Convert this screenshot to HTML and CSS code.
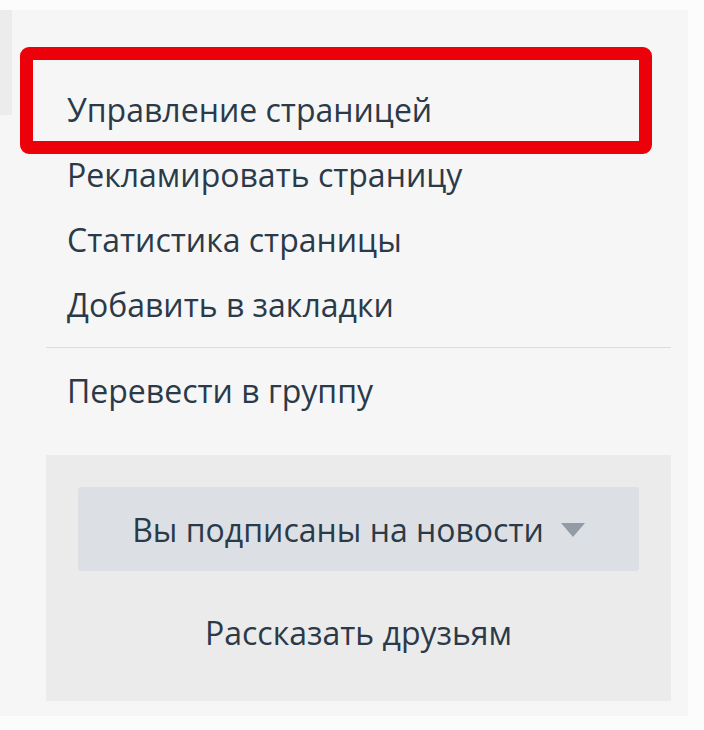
FILE: index.html
```html
<!DOCTYPE html>
<html lang="ru">
<head>
<meta charset="utf-8">
<title>Меню страницы</title>
<link rel="stylesheet" href="styles.css">
</head>
<body>
<div class="page">
  <div class="panel">
    <ul class="menu">
      <li class="item item-highlight">Управление страницей</li>
      <li class="item">Рекламировать страницу</li>
      <li class="item">Статистика страницы</li>
      <li class="item">Добавить в закладки</li>
    </ul>
    <div class="divider"></div>
    <ul class="menu">
      <li class="item">Перевести в группу</li>
    </ul>
    <div class="actions">
      <div class="subscribe-btn">
        <span>Вы подписаны на новости</span>
        <span class="caret"></span>
      </div>
      <div class="share">Рассказать друзьям</div>
    </div>
  </div>
</div>
</body>
</html>
```

FILE: styles.css
```css
html, body {
  margin: 0;
  padding: 0;
  background: #fcfcfc;
}
body {
  font-family: "Open Sans", "Noto Sans", sans-serif;
  color: #2b3a49;
}
.page {
  width: 704px;
  height: 730px;
  padding-top: 10px;
  box-sizing: border-box;
}
.panel {
  position: relative;
  width: 688px;
  height: 706px;
  background: #f6f6f6;
  padding: 67px 17px 0 46px;
  box-sizing: border-box;
}
.panel::before {
  content: "";
  position: absolute;
  left: 0;
  top: 0;
  width: 12px;
  height: 105px;
  background: #ececec;
}
.menu {
  list-style: none;
  margin: 0;
  padding: 0;
}
.item {
  height: 65px;
  line-height: 65px;
  padding-left: 21px;
  font-size: 32px;
  white-space: nowrap;
}
.item-highlight {
  position: relative;
}
.item-highlight::after {
  content: "";
  position: absolute;
  left: -26px;
  top: -30px;
  width: 632px;
  height: 107px;
  box-sizing: border-box;
  border: 13px solid #ec0009;
  border-radius: 9px;
}
.divider {
  height: 1px;
  background: #dcdcdc;
  margin: 10px 0 10px;
}
.actions {
  margin-top: 32px;
  background: #ebebeb;
  height: 246px;
  padding: 32px 32px 0;
  box-sizing: border-box;
}
.subscribe-btn {
  height: 84px;
  background: #dce0e4;
  border-radius: 3px;
  display: flex;
  align-items: center;
  justify-content: center;
  gap: 17px;
  font-size: 32px;
}
.caret {
  width: 0;
  height: 0;
  border-left: 12px solid transparent;
  border-right: 12px solid transparent;
  border-top: 14px solid #939ca6;
  margin-top: 2px;
}
.share {
  text-align: center;
  font-size: 32px;
  line-height: 124px;
}
```
